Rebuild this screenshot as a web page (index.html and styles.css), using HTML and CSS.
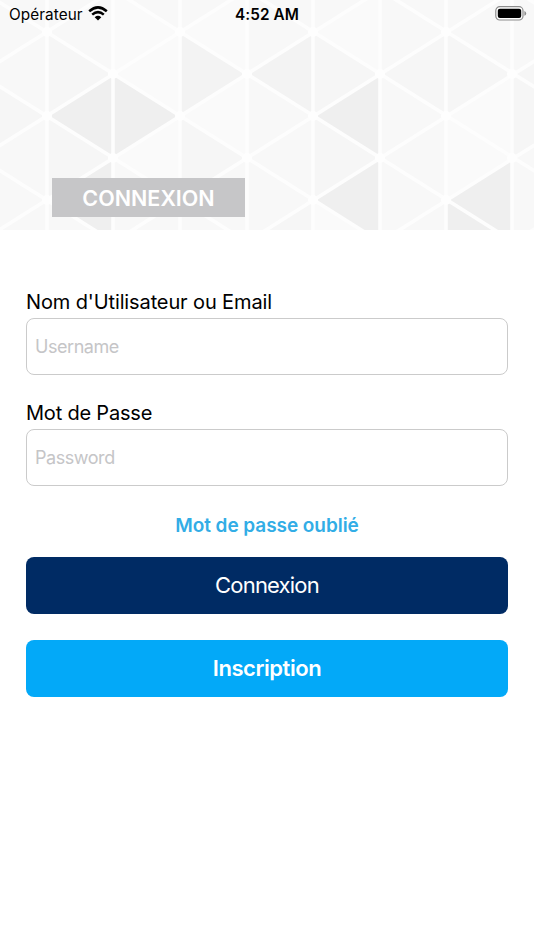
FILE: index.html
```html
<!DOCTYPE html>
<html lang="fr">
<head>
<meta charset="utf-8">
<title>Connexion</title>
<link rel="stylesheet" href="styles.css">
</head>
<body>
<header class="hero">
  <svg class="pattern" viewBox="0 0 534 230" aria-hidden="true">
    <rect width="534" height="230" fill="#f8f8f8"/>
    <path fill="#efefef" d="M113 74V158L47 116ZM113 74V158L180 116ZM113 158V242L47 200ZM380 74V158L313 116ZM380 158V242L313 200ZM512 158V242L446 200ZM446 200V284L512 242Z"/>
    <path fill="#f3f3f3" d="M180 32V116L247 74ZM313 32V116L247 74Z"/>
    <path fill="#f6f6f6" d="M47 32V116L113 74ZM47 116V200L113 158ZM180 116V200L247 158ZM313 32V116L380 74ZM313 116V200L380 158ZM446 32V116L380 74ZM446 32V116L512 74ZM512 74V158L579 116ZM579 32V116L512 74ZM-20 74V158L47 116ZM313 200V284L247 242Z"/>
    <path fill="#fafafa" d="M113 -10V74L180 32ZM180 32V116L113 74ZM180 116V200L113 158ZM247 -10V74L180 32ZM247 74V158L180 116ZM380 -10V74L313 32ZM313 200V284L380 242ZM446 116V200L512 158ZM512 74V158L446 116Z"/>
    <g class="grid-lines">
      <path d="M47 0V230M113 0V230M180 0V230M247 0V230M313 0V230M380 0V230M446 0V230M512 0V230"/>
      <path d="M-20 -10L579 367M-20 74L579 451M-20 158L579 535M-20 -94L579 283M-20 -178L579 199M-20 -262L579 115M-20 -346L579 31"/>
      <path d="M-20 74L579 -303M-20 158L579 -219M-20 242L579 -135M-20 326L579 -51M-20 410L579 33M-20 494L579 117M-20 578L579 201"/>
    </g>
    <g fill="#fefefe"><circle cx="47" cy="32" r="5"/><circle cx="180" cy="32" r="5"/><circle cx="313" cy="32" r="5"/><circle cx="446" cy="32" r="5"/><circle cx="113" cy="74" r="5"/><circle cx="247" cy="74" r="5"/><circle cx="380" cy="74" r="5"/><circle cx="512" cy="74" r="5"/><circle cx="47" cy="116" r="5"/><circle cx="180" cy="116" r="5"/><circle cx="313" cy="116" r="5"/><circle cx="446" cy="116" r="5"/><circle cx="113" cy="158" r="5"/><circle cx="247" cy="158" r="5"/><circle cx="380" cy="158" r="5"/><circle cx="512" cy="158" r="5"/><circle cx="47" cy="200" r="5"/><circle cx="313" cy="200" r="5"/><circle cx="446" cy="200" r="5"/></g>
  </svg>
  <div class="status">
    <div class="carrier"><span>Opérateur</span>
      <svg class="wifi" width="20" height="15" viewBox="0 0 20 15" aria-hidden="true">
        <g fill="none" stroke="#000" stroke-width="2.5"><path d="M1.2 5.3Q10 -2.5 18.8 5.3"/><path d="M4.2 8.6Q10 3.6 15.8 8.6"/></g>
        <path d="M6.7 11.2Q10 8.4 13.3 11.2L10 14.5Z"/>
      </svg>
    </div>
    <time class="clock">4:52 AM</time>
    <svg class="battery" width="32" height="15" viewBox="0 0 32 15" aria-hidden="true">
      <rect x=".8" y=".7" width="27.2" height="13.3" rx="4" fill="#fff" stroke="#8c8c8c" stroke-width="1.2"/>
      <rect x="2.8" y="2.7" width="23.4" height="9.3" rx="2"/>
      <path d="M29.4 5Q31.2 5.6 31.2 7.4T29.4 9.8Z" fill="#8c8c8c"/>
    </svg>
  </div>
  <h1 class="title"><span>CONNEXION</span></h1>
</header>
<form class="form">
  <label class="label user-label" for="user"><span>Nom d'Utilisateur ou Email</span></label>
  <input class="field user-field" id="user" type="text" placeholder="Username">
  <label class="label pass-label" for="pass"><span>Mot de Passe</span></label>
  <input class="field" id="pass" type="password" placeholder="Password">
  <a class="forgot"><span>Mot de passe oublié</span></a>
  <button class="button login" type="button"><span>Connexion</span></button>
  <button class="button signup" type="button"><span>Inscription</span></button>
</form>
</body>
</html>
```
FILE: styles.css
```css
* { box-sizing: border-box; }
body { margin: 0; min-height: 950px; background: #fff; color: #000; font-family: Inter, "Liberation Sans", sans-serif; }
.hero { position: relative; height: 230px; overflow: hidden; }
.pattern { position: absolute; inset: 0; width: 534px; height: 230px; }
.grid-lines { fill: none; stroke: #fdfdfd; stroke-width: 3.6; }
.status { position: relative; display: grid; grid-template-columns: 1fr auto 1fr; align-items: center; height: 28px; padding: 0 7px 0 9px; }
.carrier { display: flex; align-items: center; gap: 5px; font-size: 15.3px; letter-spacing: .08px; line-height: 28px; }
.wifi { margin-top: -2px; }
.clock { margin-right: 2px; font-size: 15.3px; font-weight: 600; letter-spacing: .1px; line-height: 28px; }
.carrier span, .clock { padding-top: 1px; }
.battery { justify-self: end; margin-top: -2px; }
.title { position: relative; display: flex; align-items: center; justify-content: center; width: 193px; height: 39px; margin: 150px 0 0 52px; padding-top: 2px; background: #c6c6c8; color: #fff; font-size: 21.5px; font-weight: 600; line-height: 37px; }
.form { display: flex; flex-direction: column; padding: 58px 26px 0; }
.label { height: 30px; font-size: 20px; line-height: 28px; letter-spacing: -.12px; }
.pass-label { line-height: 29px; letter-spacing: -.2px; }
.field { width: 100%; height: 57px; padding: 0 8px; border: 1.5px solid #cbcbcb; border-radius: 8px; background: #fff; font: 18px Inter, "Liberation Sans", sans-serif; letter-spacing: -.45px; }
.field::placeholder { color: #c5c5c7; opacity: 1; }
.user-field { margin-bottom: 24px; }
.forgot { height: 30px; margin: 24px 0 17px; color: #32ade6; font-size: 19px; font-weight: 600; line-height: 31px; letter-spacing: -.05px; text-align: center; }
.button { height: 57px; border: 0; border-radius: 8px; color: #fff; font: 22px/57px Inter, "Liberation Sans", sans-serif; padding: 0; }
.login { margin-bottom: 26px; background: #002b64; letter-spacing: -.8px; }
.signup { background: #03a9f8; font-weight: 600; letter-spacing: -.45px; }
```
